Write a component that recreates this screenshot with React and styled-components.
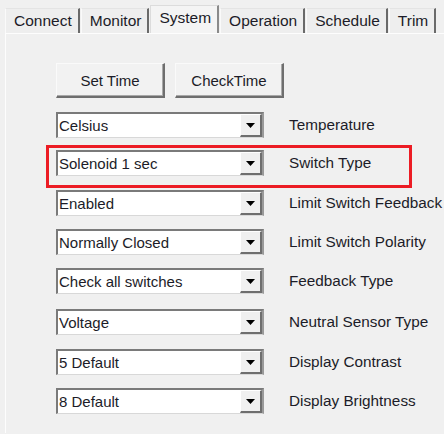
import React from 'react';
import styled, { createGlobalStyle } from 'styled-components';

const GlobalStyle = createGlobalStyle`
    html, body {
        margin: 0;
        padding: 0;
        background: #f0f0f0;
        font-family: "Liberation Sans", Arial, sans-serif;
    }
`;

const Window = styled.div`
    width: 444px;
    height: 434px;
    overflow: hidden;
    background: #f0f0f0;
`;

const TabBar = styled.div`
    display: flex;
    align-items: flex-end;
    height: 33px;
    padding-left: 5px;
`;

const Tab = styled.div`
    box-sizing: border-box;
    height: ${(p) => (p.$active ? '28px' : '25px')};
    padding: 0 6px 0 8px;
    display: flex;
    align-items: center;
    font-size: 15.5px;
    color: #1c1c28;
    background: ${(p) => (p.$active ? '#f4f4f4' : '#eeeeee')};
    border-top: 1px solid ${(p) => (p.$active ? '#dcdcdc' : '#e4e4e4')};
    border-left: 1px solid ${(p) => (p.$active ? '#dcdcdc' : '#fafafa')};
    border-right: 2px solid ${(p) => (p.$active ? '#8a8a8a' : '#6a6a6a')};
    margin-right: 1px;
    padding-bottom: ${(p) => (p.$active ? '4px' : '0')};
`;

const Panel = styled.div`
    margin-left: 5px;
    border-top: 1px solid #fdfdfd;
    border-left: 1px solid #fdfdfd;
    height: 400px;
    padding: 29px 0 0 50px;
    box-sizing: border-box;
`;

const ButtonRow = styled.div`
    display: flex;
    gap: 10px;
`;

const Button = styled.button`
    width: 109px;
    height: 35px;
    font-family: inherit;
    font-size: 15px;
    color: #1c1c28;
    background: #f2f2f2;
    border: 1px solid #c8c8c8;
    border-right: 2px solid #6e6e6e;
    border-bottom: 2px solid #6e6e6e;
    border-top-color: #fafafa;
    border-left-color: #fafafa;
    box-shadow: inset -1px -1px 0 #a8a8a8;
    padding: 0;
`;

const Rows = styled.div`
    display: flex;
    flex-direction: column;
`;

const Row = styled.div`
    position: relative;
    display: flex;
    align-items: center;
    height: 26px;
    margin-top: ${(p) => p.$mt}px;
`;

const Select = styled.div`
    box-sizing: border-box;
    width: 208px;
    height: 26px;
    display: flex;
    align-items: center;
    justify-content: space-between;
    background: #ffffff;
    border-top: 2px solid #7a7a7a;
    border-left: 2px solid #7a7a7a;
    border-right: 2px solid #9a9a9a;
    border-bottom: 1px solid #d8d8d8;
    font-size: 15px;
    color: #1c1c28;
    padding-left: 1px;
`;

const Arrow = styled.div`
    box-sizing: border-box;
    width: 22px;
    height: 23px;
    align-self: flex-start;
    display: flex;
    align-items: center;
    justify-content: center;
    background: #f0f0f0;
    border-left: 1px solid #ffffff;
    border-top: 1px solid #ffffff;
    border-right: 2px solid #6e6e6e;
    border-bottom: 2px solid #6e6e6e;
`;

const Label = styled.span`
    margin-left: 25px;
    font-size: 15.3px;
    color: #1c1c28;
    white-space: nowrap;
`;

const Highlight = styled.div`
    position: absolute;
    left: -10px;
    top: -5px;
    width: 366px;
    height: 43px;
    box-sizing: border-box;
    border: 3px solid #ec1c24;
    pointer-events: none;
`;

const tabs = ['Connect', 'Monitor', 'System', 'Operation', 'Schedule', 'Trim'];

const rows = [
    { value: 'Celsius', label: 'Temperature', mt: 14 },
    { value: 'Solenoid 1 sec', label: 'Switch Type', mt: 12, highlight: true },
    { value: 'Enabled', label: 'Limit Switch Feedback', mt: 14 },
    { value: 'Normally Closed', label: 'Limit Switch Polarity', mt: 13 },
    { value: 'Check all switches', label: 'Feedback Type', mt: 13 },
    { value: 'Voltage', label: 'Neutral Sensor Type', mt: 15 },
    { value: '5 Default', label: 'Display Contrast', mt: 14 },
    { value: '8 Default', label: 'Display Brightness', mt: 13 },
];

const DropArrow = () => (
    <svg width="9" height="5" viewBox="0 0 9 5">
        <path d="M0 0 H9 L4.5 5 Z" fill="#000" />
    </svg>
);

const App = () => {
    return (
        <Window>
            <GlobalStyle />
            <TabBar>
                {tabs.map((t) => (
                    <Tab key={t} $active={t === 'System'}>{t}</Tab>
                ))}
            </TabBar>
            <Panel>
                <ButtonRow>
                    <Button>Set Time</Button>
                    <Button>CheckTime</Button>
                </ButtonRow>
                <Rows>
                    {rows.map((r) => (
                        <Row key={r.label} $mt={r.mt}>
                            <Select>
                                <span>{r.value}</span>
                                <Arrow><DropArrow /></Arrow>
                            </Select>
                            <Label>{r.label}</Label>
                            {r.highlight && <Highlight />}
                        </Row>
                    ))}
                </Rows>
            </Panel>
        </Window>
    );
};

export default App;
